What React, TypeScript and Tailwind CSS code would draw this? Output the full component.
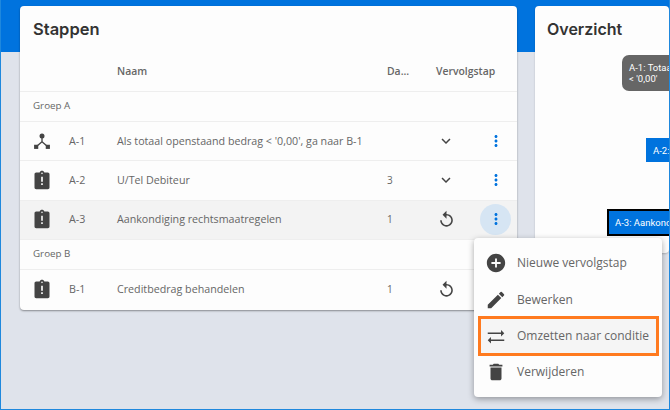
const sans = "font-['Open_Sans',sans-serif]";

// material paths, same set as the app uses
const paths = {
  alert: "M19 3h-4.18C14.4 1.84 13.3 1 12 1s-2.4.84-2.82 2H5c-1.1 0-2 .9-2 2v16c0 1.1.9 2 2 2h14c1.1 0 2-.9 2-2V5c0-1.1-.9-2-2-2zm-6 15h-2v-2h2v2zm0-4h-2V8h2v6zm-1-9c-.55 0-1-.45-1-1s.45-1 1-1 1 .45 1 1-.45 1-1 1z",
  chevron: "M7.41 8.59 12 13.17l4.59-4.58L18 10l-6 6-6-6z",
  dots: "M12 8c1.1 0 2-.9 2-2s-.9-2-2-2-2 .9-2 2 .9 2 2 2zm0 2c-1.1 0-2 .9-2 2s.9 2 2 2 2-.9 2-2-.9-2-2-2zm0 6c-1.1 0-2 .9-2 2s.9 2 2 2 2-.9 2-2-.9-2-2-2z",
  replay: "M12 5V1L7 6l5 5V7c3.31 0 6 2.69 6 6s-2.69 6-6 6-6-2.69-6-6H4c0 4.42 3.58 8 8 8s8-3.58 8-8-3.58-8-8-8z",
  plus: "M12 2C6.48 2 2 6.48 2 12s4.48 10 10 10 10-4.48 10-10S17.52 2 12 2zm5 11h-4v4h-2v-4H7v-2h4V7h2v4h4v2z",
  pencil: "M3 17.25V21h3.75L17.81 9.94l-3.75-3.75L3 17.25zM20.71 7.04a1 1 0 0 0 0-1.41l-2.34-2.34a1 1 0 0 0-1.41 0l-1.83 1.83 3.75 3.75 1.83-1.83z",
  swap: "M3 8.2h14.5V5.5L21 9l-3.5 3.5V9.8H3V8.2zM21 15.8H6.5v-2.7L3 16.6l3.5 3.5v-2.7H21v-1.6z",
  trash: "M6 19c0 1.1.9 2 2 2h8c1.1 0 2-.9 2-2V7H6v12zM19 4h-3.5l-1-1h-5l-1 1H5v2h14V4z",
};

function Icon({ d, size = 24, className = "text-[#444]" }: { d: string; size?: number; className?: string }) {
  return (
    <svg width={size} height={size} viewBox="0 0 24 24" className={className} fill="currentColor">
      <path d={d} />
    </svg>
  );
}

// condition step icon
const SplitIcon = () => (
  <svg width={20} height={20} viewBox="0 0 24 24" className="text-[#444]" fill="currentColor">
    <circle cx="12" cy="6" r="3" />
    <rect x="2.5" y="16.5" width="5" height="5" />
    <rect x="16.5" y="16.5" width="5" height="5" />
    <path d="M12 8v5.5M12 13l-7 6M12 13l7 6" stroke="currentColor" strokeWidth="1.6" fill="none" />
  </svg>
);

const Group = ({ name }: { name: string }) => (
  <div className="h-[30px] flex items-center pl-[13px] border-b border-[#eeeeee] text-[9.8px] text-[#666]">{name}</div>
);

function Row(props: { icon?: string; code: string; name: string; days?: string; done?: boolean; active?: boolean }) {
  return (
    <div className={`h-[39.4px] pb-[1px] flex items-center border-b last:border-b-0 border-[#eeeeee] text-[#666] text-[10.7px] ${props.active ? "bg-[#f3f3f3]" : ""}`}>
      <div className="w-[49px] pl-[12px] flex shrink-0">
        {props.icon ? <Icon d={props.icon} size={20} /> : <SplitIcon />}
      </div>
      <div className="w-[48px] shrink-0">{props.code}</div>
      <div className="w-[270px] shrink-0 whitespace-nowrap">{props.name}</div>
      <div className="w-[49px] shrink-0 text-[10px]">{props.days}</div>
      <div className="w-[20px] flex justify-center shrink-0">
        <Icon d={props.done ? paths.replay : paths.chevron} size={props.done ? 19 : 18} />
      </div>
      <div className="flex-1 flex justify-end pr-[6px]">
        <div className={`w-[31px] h-[31px] rounded-full flex items-center justify-center ${props.active ? "bg-[#d6e5f3]" : ""}`}>
          <Icon d={paths.dots} size={18} className="text-[#0073de]" />
        </div>
      </div>
    </div>
  );
}

function MenuItem({ icon, label, outlined }: { icon: string; label: string; outlined?: boolean }) {
  return (
    <div className={`h-[36.4px] flex items-center text-[12px] text-[#666] ${outlined ? "ml-[6px] mr-[5px] pl-[5px] bg-[#f5f5f5] outline-[3px] outline-[#ff7a1f] -outline-offset-[1px]" : "pl-[11px]"}`}>
      <Icon d={icon} size={22} />
      <span className="ml-[10px] whitespace-nowrap">{label}</span>
    </div>
  );
}

export default function App() {
  return (
    <div className={`h-[410px] w-[670px] overflow-hidden relative bg-[#dfe3eb] border-l border-r border-b border-[#1f88dd] ${sans}`}>
      <div className="h-[52px] bg-[#0073de]" />
      <div className="-mt-[46px] ml-[19px] flex gap-[18px] items-start">
        <div className="w-[497px] h-[304px] shrink-0 bg-[#fdfdfd] rounded-[4px] shadow-[0_1px_2px_rgba(0,0,0,0.4)]">
          <div className="h-[46px] pl-[13px] pt-[10px] text-[16.5px] font-semibold leading-[26px] text-[#333] font-['Inter',sans-serif]">Stappen</div>
          <div className="h-[40px] flex items-center border-b border-[#eeeeee] text-[10.4px] font-semibold text-[#666]">
            <div className="w-[97px] shrink-0" />
            <div className="w-[270px] shrink-0">Naam</div>
            <div className="w-[49px] shrink-0">Da...</div>
            <div>Vervolgstap</div>
          </div>
          <Group name="Groep A" />
          <Row code="A-1" name="Als totaal openstaand bedrag < '0,00', ga naar B-1" />
          <Row icon={paths.alert} code="A-2" name="U/Tel Debiteur" days="3" />
          <Row icon={paths.alert} code="A-3" name="Aankondiging rechtsmaatregelen" days="1" done active />
          <Group name="Groep B" />
          <Row icon={paths.alert} code="B-1" name="Creditbedrag behandelen" days="1" done />
        </div>
        <div className="flex-1 h-[247px] bg-[#fdfdfd] rounded-[4px] shadow-[0_1px_2px_rgba(0,0,0,0.2)] overflow-hidden">
          <div className="h-[45px] pl-3 pt-[10px] text-[16px] font-semibold leading-[26px] text-[#333] font-['Inter',sans-serif]">Overzicht</div>
          <div className="flex flex-col items-end text-[9.5px] text-white leading-[11px] font-['Roboto',sans-serif]">
            <div className="w-[47px] h-[36px] mt-[4px] bg-[#666] rounded-l-[7px] pl-[7px] pt-[7px] whitespace-nowrap overflow-hidden">A-1: Totaal<br />&lt; '0,00'</div>
            <div className="w-[23px] h-[24px] mt-[47px] bg-[#0073de] flex items-center pl-[7px] whitespace-nowrap overflow-hidden">A-2:</div>
            <div className="w-[62px] h-[27px] mt-[47px] bg-[#0073de] border-2 border-r-0 border-black flex items-center pl-[6px] whitespace-nowrap overflow-hidden">A-3: Aankond</div>
          </div>
        </div>
      </div>
      {/* opened row menu */}
      <div className="absolute left-[473px] top-[238px] w-[188px] pt-[7px] h-[159px] bg-[#fdfdfd] rounded-[4px] shadow-[0_2px_6px_rgba(0,0,0,0.35)]">
        <MenuItem icon={paths.plus} label="Nieuwe vervolgstap" />
        <MenuItem icon={paths.pencil} label="Bewerken" />
        <MenuItem icon={paths.swap} label="Omzetten naar conditie" outlined />
        <MenuItem icon={paths.trash} label="Verwijderen" />
      </div>
    </div>
  );
}
